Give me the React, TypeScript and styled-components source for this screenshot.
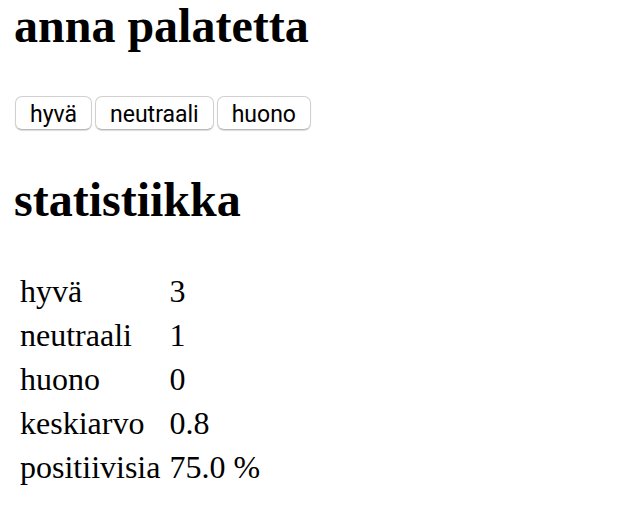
import React, { useState } from 'react';
import styled, { createGlobalStyle } from 'styled-components';

const GlobalStyle = createGlobalStyle`
  body {
    margin: 0;
    background: #fff;
    color: #000;
    font-family: "Liberation Serif", "Times New Roman", serif;
    font-size: 32px;
  }
`;

const Page = styled.main`
  padding: 0 14px;
`;

const Heading = styled.h1`
  margin: 0;
  font-size: 48px;
  line-height: 52px;
  font-weight: 700;
`;

const ButtonRow = styled.div`
  display: flex;
  gap: 3px;
  margin: 44px 0;
  padding-left: 1px;
`;

const FeedbackButton = styled.button`
  height: 34px;
  padding: 3px 14px 0;
  border: 1px solid #d0d0d0;
  border-bottom-color: #b8b8b8;
  border-radius: 7px;
  background: #fff;
  color: #000;
  font-family: Roboto, sans-serif;
  font-size: 23px;
  line-height: 29px;
  box-shadow: 0 1px 1px #dcdcdc;
`;

const Statistics = styled.table`
  margin-top: 41px;
  border-collapse: separate;
  border-spacing: 4px;
`;

const Cell = styled.td`
  padding: 2px 3px 2px 2px;
  line-height: 36px;
`;

type Rating = 'hyvä' | 'neutraali' | 'huono';
const ratings: Rating[] = ['hyvä', 'neutraali', 'huono'];

export default function App() {
  const [votes, setVotes] = useState<Record<Rating, number>>({ hyvä: 3, neutraali: 1, huono: 0 });
  const total = votes.hyvä + votes.neutraali + votes.huono;
  const average = (votes.hyvä - votes.huono) / total;
  const rows: [string, string][] = [
    ...ratings.map((r): [string, string] => [r, String(votes[r])]),
    ['keskiarvo', (Math.round(average * 10) / 10).toFixed(1)],
    ['positiivisia', `${((votes.hyvä / total) * 100).toFixed(1)} %`],
  ];

  return (
    <Page>
      <GlobalStyle />
      <Heading>anna palatetta</Heading>
      <ButtonRow>
        {ratings.map((r) => (
          <FeedbackButton key={r} type="button" onClick={() => setVotes({ ...votes, [r]: votes[r] + 1 })}>
            {r}
          </FeedbackButton>
        ))}
      </ButtonRow>
      <Heading>statistiikka</Heading>
      <Statistics>
        <tbody>
          {rows.map(([label, value]) => (
            <tr key={label}>
              <Cell>{label}</Cell>
              <Cell>{value}</Cell>
            </tr>
          ))}
        </tbody>
      </Statistics>
    </Page>
  );
}
